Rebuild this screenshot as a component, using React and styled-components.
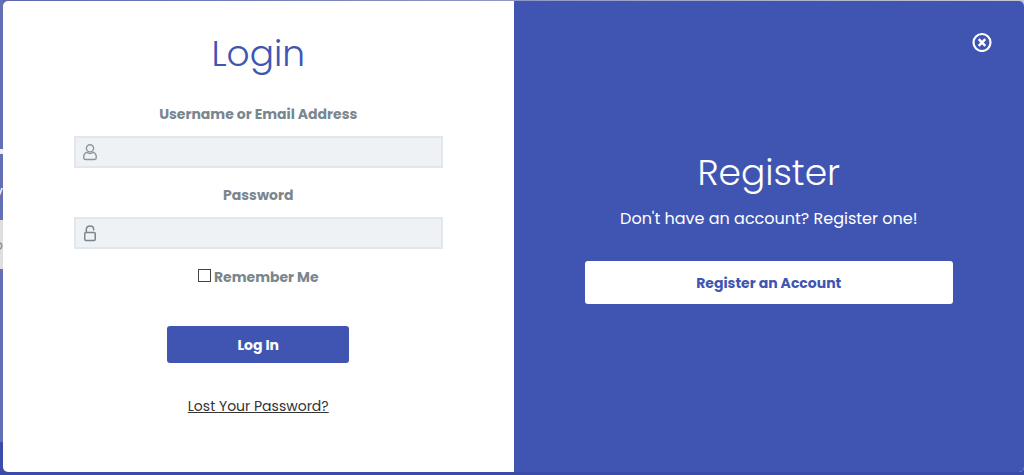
import React from 'react';
import styled, { createGlobalStyle } from 'styled-components';

const BLUE = '#4055b2';
const GREY = '#7a868e';

const GlobalStyle = createGlobalStyle`
  *, *::before, *::after { box-sizing: border-box; }
  body {
    margin: 0;
    font-family: Poppins, Inter, "Open Sans", sans-serif;
    font-size: 14px;
    line-height: 20px;
  }
  h2, p { margin: 0; }
  button, input { font: inherit; }
`;

const Page = styled.div`
  position: relative;
  display: flex;
  min-height: 100vh;
  padding: 1px 0 3px 3px;
  background:
    linear-gradient(#3a4ba8, #3a4ba8) bottom / 100% 33px no-repeat,
    linear-gradient(90deg, #5a67b0, #8f98c6 50%, #c3c7d6);
`;

const PageBehind = styled.div`
  position: absolute;
  top: 0;
  left: 0;
  width: 3px;
  overflow: hidden;
  padding-top: 149px;
  background: #6370b5;
  height: calc(100% - 33px);
`;

const Bar = styled.div`
  height: 5px;
  background: #eceef5;
`;

const Caption = styled.div`
  display: flex;
  justify-content: flex-end;
  height: 66px;
  padding-top: 28px;
  color: #ffffff;
  font-size: 16px;
`;

const GreyBox = styled.div`
  display: flex;
  align-items: center;
  justify-content: flex-end;
  height: 49px;
  background: #dfdfdf;
  color: #8a8a8a;
`;

const Dialog = styled.main`
  position: relative;
  display: grid;
  grid-template-columns: 1fr 1fr;
  flex: 1;
  overflow: hidden;
  border-radius: 5px;
  background: #ffffff;
`;

const LoginPanel = styled.form`
  display: flex;
  flex-direction: column;
  align-items: center;
  padding: 29px 71px;
`;

const RegisterPanel = styled.section`
  display: flex;
  flex-direction: column;
  align-items: center;
  justify-content: center;
  padding: 0 71px 20px;
  background: ${BLUE};
  color: #ffffff;
`;

const Title = styled.h2`
  color: ${(p) => (p.$light ? '#ffffff' : BLUE)};
  font-size: 36px;
  font-weight: 300;
  line-height: 48px;
`;

const Fields = styled.div`
  display: flex;
  flex-direction: column;
  gap: 17px;
  width: 100%;
  margin: 26px 0 18px;
`;

const Field = styled.div`
  display: flex;
  flex-direction: column;
  align-items: center;
  gap: 12px;
`;

const Label = styled.label`
  color: ${GREY};
  font-weight: 700;
`;

const InputBox = styled.div`
  display: flex;
  align-items: center;
  width: 100%;
  height: 32px;
  padding-left: 7px;
  border: 2px solid #e2e7ed;
  background: #eef2f5;
  color: #8b979f;
`;

const TextInput = styled.input`
  flex: 1;
  min-width: 0;
  height: 100%;
  padding: 0 7px;
  border: 0;
  outline: 0;
  background: transparent;
  color: #555555;
`;

const Remember = styled.div`
  display: flex;
  align-items: center;
  gap: 3px;
`;

const Checkbox = styled.input`
  appearance: none;
  width: 13px;
  height: 13px;
  margin: 0 0 3px;
  border: 1px solid #444444;
  background: #ffffff;
  &:checked { background: ${BLUE}; }
`;

const LoginButton = styled.button`
  width: 182px;
  height: 37px;
  margin: 39px 0 33px;
  border: 0;
  border-radius: 3px;
  background: ${BLUE};
  color: #ffffff;
  font-weight: 700;
`;

const LostLink = styled.a`
  color: #333333;
  text-decoration: underline;
`;

const Prompt = styled.p`
  margin: 12px 0 32px;
  font-size: 16px;
`;

const RegisterButton = styled.button`
  width: 100%;
  height: 43px;
  border: 0;
  border-radius: 3px;
  background: #ffffff;
  color: ${BLUE};
  font-weight: 700;
`;

const CloseButton = styled.button`
  position: absolute;
  top: 31px;
  right: 32px;
  width: 20px;
  height: 20px;
  padding: 0;
  border: 0;
  background: none;
  color: #ffffff;
  svg { display: block; }
`;

const UserIcon = () => (
  <svg width="14" height="17" viewBox="0 0 14 17" fill="none" stroke="currentColor" strokeWidth="1.4" aria-hidden="true">
    <circle cx="7" cy="4.300" r="3.600" />
    <path d="M3.700 8.300C1.600 8.900.7 10.800.7 13.200c0 1.500.7 2.300 2 2.300h8.600c1.300 0 2-.8 2-2.300 0-2.400-.9-4.300-3-4.900C8.200 9.900 5.800 9.900 3.700 8.300Z" />
  </svg>
);

const LockIcon = () => (
  <svg width="14" height="17" viewBox="0 0 14 17" fill="none" stroke="#7a868e" strokeWidth="1.5" aria-hidden="true">
    <rect x="1.750" y="7.500" width="10.500" height="8" rx="1.200" />
    <path d="M3.300 7.500V4.500C3.300 2.300 4.800.9 7 .9s3.700 1.400 3.700 3.600v.9" />
  </svg>
);

const CloseIcon = () => (
  <svg width="20" height="20" viewBox="0 0 20 20" fill="none" stroke="currentColor" aria-hidden="true">
    <circle cx="10" cy="10.500" r="8.500" strokeWidth="2.200" />
    <path d="M6.700 7.200l6.600 6.600M13.300 7.200l-6.600 6.600" strokeWidth="2.500" />
  </svg>
);

export default function App() {
  return (
    <>
      <GlobalStyle />
      <Page>
        <PageBehind aria-hidden="true">
          <Bar />
          <Caption>y</Caption>
          <GreyBox>o</GreyBox>
        </PageBehind>
        <Dialog>
          <LoginPanel onSubmit={(e) => e.preventDefault()}>
            <Title>Login</Title>
            <Fields>
              <Field>
                <Label htmlFor="username">Username or Email Address</Label>
                <InputBox>
                  <UserIcon />
                  <TextInput id="username" type="text" />
                </InputBox>
              </Field>
              <Field>
                <Label htmlFor="password">Password</Label>
                <InputBox>
                  <LockIcon />
                  <TextInput id="password" type="password" />
                </InputBox>
              </Field>
            </Fields>
            <Remember>
              <Checkbox id="remember" type="checkbox" />
              <Label htmlFor="remember">Remember Me</Label>
            </Remember>
            <LoginButton type="submit">Log In</LoginButton>
            <LostLink href="#lost-password">Lost Your Password?</LostLink>
          </LoginPanel>
          <RegisterPanel>
            <Title $light>Register</Title>
            <Prompt>Don't have an account? Register one!</Prompt>
            <RegisterButton type="button">Register an Account</RegisterButton>
          </RegisterPanel>
          <CloseButton type="button" aria-label="Close">
            <CloseIcon />
          </CloseButton>
        </Dialog>
      </Page>
    </>
  );
}
